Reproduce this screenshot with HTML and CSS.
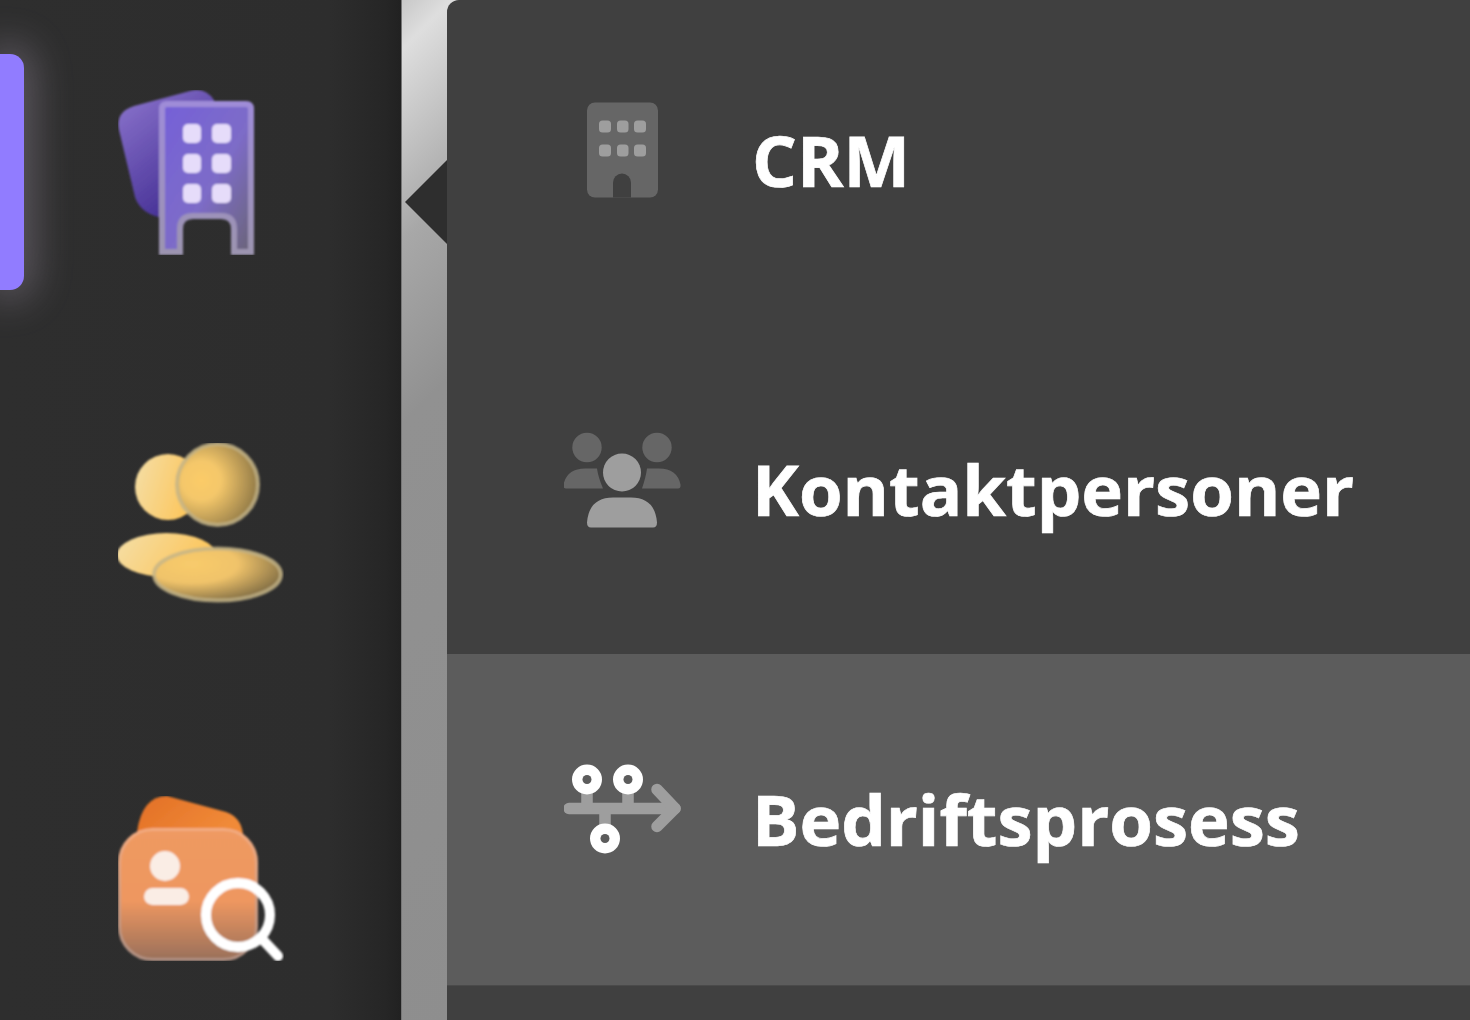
FILE: index.html
```html
<!DOCTYPE html>
<html lang="no">
<head>
<meta charset="utf-8">
<title>CRM</title>
<link rel="stylesheet" href="styles.css">
</head>
<body>
<div class="app">
  <aside class="rail">
    <div class="rail-indicator"></div>
    <svg class="rail-icon" viewBox="118 90 166 165" aria-hidden="true">
      <defs>
        <linearGradient id="bBack" x1="0.1" y1="0" x2="0.7" y2="1"><stop offset="0" stop-color="#8a73cc"/><stop offset="1" stop-color="#3f2a90"/></linearGradient>
        <linearGradient id="bFront" x1="0" y1="0" x2="1" y2="1"><stop offset="0" stop-color="#7560d8"/><stop offset="0.55" stop-color="#7d6cc8"/><stop offset="1" stop-color="#6a6478"/></linearGradient>
        <linearGradient id="bEdge" x1="0" y1="0" x2="0" y2="1"><stop offset="0" stop-color="#9f8cd8"/><stop offset="1" stop-color="#9c94b0"/></linearGradient>
        <filter id="soft" x="-10%" y="-10%" width="120%" height="120%"><feGaussianBlur stdDeviation="1"/></filter>
      </defs>
      <g filter="url(#soft)">
        <path d="M134 106 L190 91 Q205 87 214 100 L190 210 L158 217 Q140 212 135 197 L119 130 Q115 112 134 106Z" fill="url(#bBack)"/>
        <path d="M167 104 H246 Q251 104 251 109 V252 H234 V229 Q234 216 221 216 H193 Q180 216 180 229 V252 H162 V109 Q162 104 167 104Z" fill="url(#bFront)" stroke="url(#bEdge)" stroke-width="6"/>
        <g fill="#e6dcfa">
          <rect x="183" y="124" width="18" height="19" rx="5"/><rect x="212" y="124" width="19" height="19" rx="5"/>
          <rect x="183" y="154" width="18" height="19" rx="5"/><rect x="212" y="154" width="19" height="19" rx="5"/>
          <rect x="183" y="184" width="18" height="19" rx="5"/><rect x="212" y="184" width="19" height="19" rx="5"/>
        </g>
      </g>
    </svg>
    <svg class="rail-icon" viewBox="118 443 166 165" aria-hidden="true">
      <defs>
        <linearGradient id="cBack" x1="0" y1="0" x2="1" y2="0.3"><stop offset="0" stop-color="#f5dfa8"/><stop offset="1" stop-color="#fcc55a"/></linearGradient>
        <radialGradient id="cFront" cx="0.3" cy="0.45" r="0.8"><stop offset="0" stop-color="#fbcb68"/><stop offset="0.3" stop-color="#f4c76a"/><stop offset="1" stop-color="#7d6a40"/></radialGradient>
        <radialGradient id="cBody" cx="0.3" cy="0.3" r="0.8"><stop offset="0" stop-color="#f8cb6c"/><stop offset="0.45" stop-color="#f0c36a"/><stop offset="1" stop-color="#7a6842"/></radialGradient>
        <filter id="softer" x="-10%" y="-10%" width="120%" height="120%"><feGaussianBlur stdDeviation="1.300"/></filter>
      </defs>
      <g filter="url(#softer)">
        <circle cx="168" cy="487" r="33" fill="url(#cBack)"/>
        <ellipse cx="166.500" cy="555" rx="49.500" ry="22" fill="url(#cBack)"/>
        <circle cx="217.500" cy="484.500" r="40.500" fill="url(#cFront)" stroke="#c4b487" stroke-opacity="0.8" stroke-width="4"/>
        <ellipse cx="217.500" cy="574.500" rx="63.500" ry="26" fill="url(#cBody)" stroke="#c4b487" stroke-opacity="0.8" stroke-width="4"/>
      </g>
    </svg>
    <svg class="rail-icon" viewBox="118 796 166 165" aria-hidden="true">
      <defs>
        <linearGradient id="pBack" x1="0" y1="0" x2="1" y2="0.4"><stop offset="0" stop-color="#e26f25"/><stop offset="1" stop-color="#f08a38"/></linearGradient>
        <linearGradient id="pFront" x1="0" y1="0" x2="0" y2="1"><stop offset="0" stop-color="#ef9a62"/><stop offset="0.55" stop-color="#ee9760"/><stop offset="1" stop-color="#9a705a"/></linearGradient>
        <linearGradient id="pEdge" x1="0" y1="0" x2="0" y2="1"><stop offset="0" stop-color="#f3ab80"/><stop offset="1" stop-color="#b09082"/></linearGradient>
      </defs>
      <g filter="url(#soft)">
        <path d="M137 832 Q142 796 167 796 L226 812 Q241 817 243 834Z" fill="url(#pBack)"/>
        <rect x="119.500" y="829.500" width="137" height="130" rx="33" fill="url(#pFront)" stroke="url(#pEdge)" stroke-width="3"/>
        <circle cx="165" cy="866" r="15" fill="#faede5"/>
        <rect x="144" y="888" width="45" height="17" rx="8.500" fill="#faede5"/>
        <circle cx="238" cy="915" r="32" fill="none" stroke="#fff" stroke-width="10"/>
        <path d="M263 940 L278 956" fill="none" stroke="#fff" stroke-width="10" stroke-linecap="round"/>
      </g>
    </svg>
  </aside>
  <div class="strip">
    <div class="strip-notch"></div>
  </div>
  <main class="panel">
    <ul class="menu">
      <li class="menu-row">
        <svg class="menu-icon" viewBox="564 101.500 118 118" aria-hidden="true">
          <rect x="587" y="102" width="71" height="95" rx="8" fill="#666"/>
          <g fill="#9e9e9e">
            <rect x="599" y="120" width="12" height="12" rx="3.500"/><rect x="617" y="120" width="11.500" height="12" rx="3.500"/><rect x="634" y="120" width="12" height="12" rx="3.500"/>
            <rect x="599" y="144" width="12" height="12" rx="3.500"/><rect x="617" y="144" width="11.500" height="12" rx="3.500"/><rect x="634" y="144" width="12" height="12" rx="3.500"/>
          </g>
          <path d="M613 197 V182 A9 9 0 0 1 631 182 V197Z" fill="#404040"/>
        </svg>
        <span class="menu-label">CRM</span>
      </li>
      <li class="menu-row">
        <svg class="menu-icon" viewBox="564 430.500 118 118" aria-hidden="true">
          <g fill="#666">
            <circle cx="587" cy="447" r="14.700"/>
            <circle cx="657" cy="447" r="14.700"/>
            <path d="M566 488 Q563 488 563.500 484 Q567 468 585 468 H597 Q598 476 603 488Z"/>
            <path d="M678 488 Q681 488 680.500 484 Q677 468 659 468 H647 Q646 476 642 488Z"/>
          </g>
          <g fill="#9e9e9e">
            <circle cx="622" cy="472" r="19"/>
            <path d="M591 527 Q587 527 587 522 Q589 497 613 497 H631 Q655 497 657 522 Q657 527 653 527Z"/>
          </g>
        </svg>
        <span class="menu-label">Kontaktpersoner</span>
      </li>
      <li class="menu-row menu-row-active">
        <svg class="menu-icon" viewBox="564 760.500 118 118" aria-hidden="true">
          <g fill="none" stroke="#9e9e9e" stroke-width="11.500">
            <path d="M569 808 H675" stroke-linecap="round"/>
            <path d="M657 789 L675 808 L657 826" stroke-linecap="round" stroke-linejoin="round"/>
            <path d="M587 790 V808 M628 790 V808 M605 808 V826"/>
          </g>
          <g fill="#fff">
            <circle cx="587" cy="779" r="15"/>
            <circle cx="628" cy="779" r="15"/>
            <circle cx="605" cy="838" r="15"/>
          </g>
          <g fill="#5c5c5c">
            <circle cx="587" cy="779" r="4.500"/>
            <circle cx="628" cy="779" r="4.500"/>
            <circle cx="605" cy="838" r="4.500"/>
          </g>
        </svg>
        <span class="menu-label">Bedriftsprosess</span>
      </li>
    </ul>
  </main>
</div>
</body>
</html>
```
FILE: styles.css
```css
* { box-sizing: border-box; }
html, body { margin: 0; height: 100%; overflow: hidden; background: #2d2d2d; }
.app { display: flex; width: 1470px; height: 1020px; }
.rail {
  position: relative;
  flex: 0 0 401px;
  display: flex;
  flex-direction: column;
  gap: 188px;
  padding: 90px 0 0 118px;
  background: linear-gradient(to right, #2e2e2e 0, #2d2d2d 330px, #262626 385px, #212121 401px);
}
.rail-indicator {
  position: absolute;
  left: 0;
  top: 54px;
  width: 24px;
  height: 236px;
  border-radius: 0 14px 14px 0;
  background: #917cff;
  box-shadow: 0 0 38px 10px rgba(205, 190, 215, 0.3);
}
.rail-icon { display: block; width: 166px; height: 165px; flex: none; }
.strip {
  position: relative;
  flex: 0 0 58px;
  background: linear-gradient(135deg, #c8c8c8 0, #dedede 35px, #a8a8a8 170px, #919191 300px, #8e8e8e 100%);
  border-left: 1px solid #777;
}
.strip-notch {
  position: absolute;
  right: 12px;
  top: 160px;
  width: 42px;
  height: 84px;
  background: #2e2e2e;
  clip-path: polygon(100% 0, 0 50%, 100% 100%);
}
.panel {
  position: relative;
  flex: 1;
  min-width: 0;
  margin-left: -12px;
  overflow: hidden;
  background: #404040;
  border-radius: 12px 0 0 0;
}
.menu { list-style: none; margin: -4px 0 0; padding: 0; }
.menu-row {
  display: flex;
  align-items: center;
  gap: 70px;
  height: 329px;
  padding-left: 117px;
}
.menu-row-active { height: 332px; background: #5c5c5c; border-bottom: 1px solid #4a4a4a; }
.menu-icon { display: block; width: 118px; height: 118px; flex: none; }
.menu-label {
  font-family: "Open Sans", "Noto Sans", sans-serif;
  font-size: 70.600px;
  font-weight: 700;
  line-height: 1;
  color: #fff;
  white-space: nowrap;
  -webkit-text-stroke: 0.7px #fff;
}
```
